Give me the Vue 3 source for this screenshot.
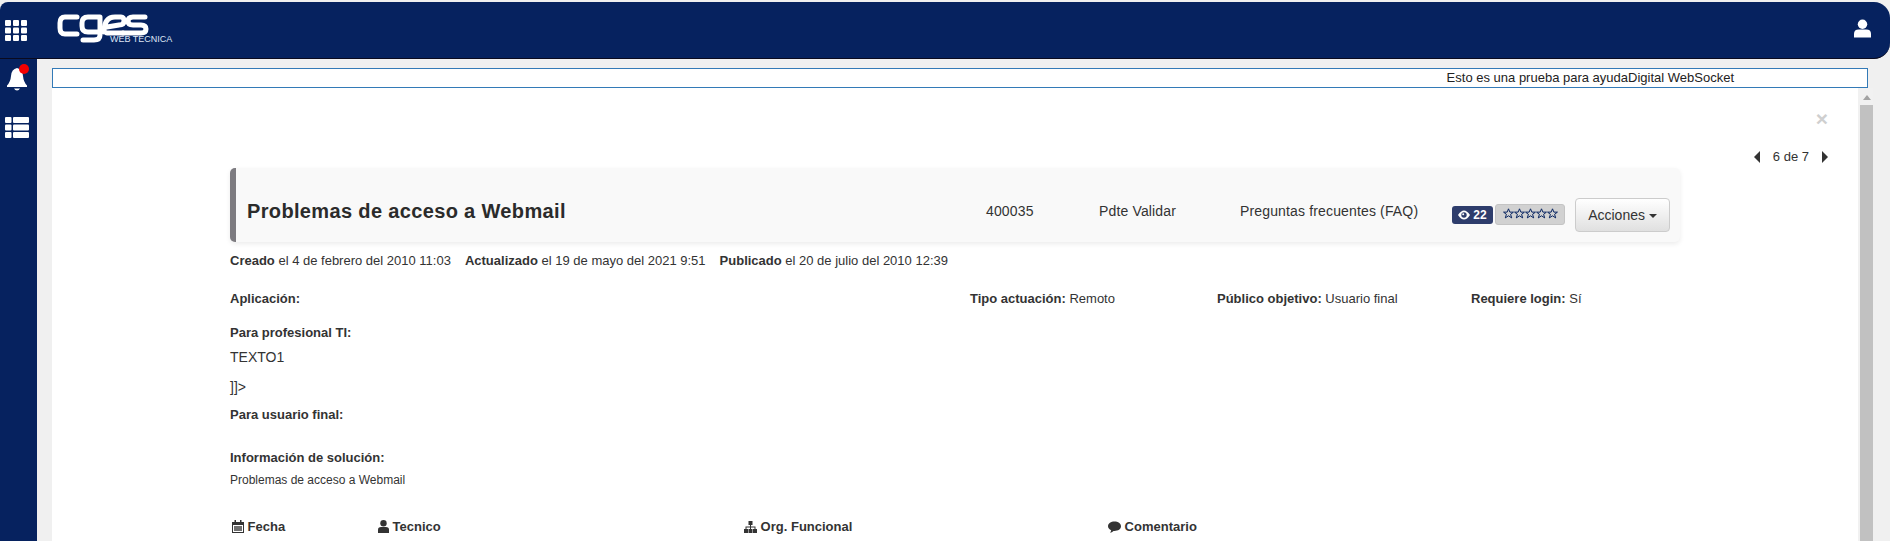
<script setup>
const metas = [
  ['Creado', 'el 4 de febrero del 2010 11:03'],
  ['Actualizado', 'el 19 de mayo del 2021 9:51'],
  ['Publicado', 'el 20 de julio del 2010 12:39'],
]
const stars = [0, 1, 2, 3, 4]
</script>

<template>
  <div class="page">
    <header class="topbar">
      <button class="side-btn">
        <svg width="22" height="22" viewBox="0 0 22 22" fill="#fff"><rect x="0" y="1" width="6" height="6" rx="1"/><rect x="8" y="1" width="6" height="6" rx="1"/><rect x="16" y="1" width="6" height="6" rx="1"/><rect x="0" y="8.500" width="6" height="6" rx="1"/><rect x="8" y="8.500" width="6" height="6" rx="1"/><rect x="16" y="8.500" width="6" height="6" rx="1"/><rect x="0" y="16" width="6" height="6" rx="1"/><rect x="8" y="16" width="6" height="6" rx="1"/><rect x="16" y="16" width="6" height="6" rx="1"/></svg>
      </button>
      <div class="logo">
        <svg width="92" height="32" viewBox="0 0 92 32" fill="none" stroke="#fff" stroke-width="5" stroke-linecap="round" stroke-linejoin="round">
          <path d="M20 5H8Q3 5 3 11V16Q3 22 8 22H20"/>
          <path d="M43 5H31Q25 5 25 11V14Q25 20 31 20H43V5M43 20V23Q43 28 37 28H26"/>
          <path d="M47 20Q47 5 58 5H64Q67 5 67 9Q67 13 62 13L50 15M50 21H66"/>
          <path d="M88 5H76Q71 5 71 9Q71 13 76 13H84Q89 13 89 17Q89 21 84 21H66"/>
        </svg>
        <span class="logo-sub">WEB TECNICA</span>
      </div>
      <svg class="user" width="17" height="19" viewBox="0 0 18 19" fill="#fff"><circle cx="9" cy="5" r="5"/><path d="M0 19V15Q0 10.500 5 10.500H13Q18 10.500 18 15V19Z"/></svg>
    </header>

    <div class="below">
      <aside class="sidebar">
        <div class="bell">
          <svg width="20" height="24" viewBox="0 0 20 24" fill="#fff"><path d="M10 1Q15.500 2 16 9Q16.500 15 20 18.500V20H0V18.500Q3.500 15 4 9Q4.500 2 10 1Z"/><path d="M7 21.500H13Q12 23.500 10 23.500Q8 23.500 7 21.500Z"/></svg>
          <span class="dot"></span>
        </div>
        <svg class="list" width="24" height="21" viewBox="0 0 24 21" fill="#fff"><rect x="0" y="0" width="6.500" height="6" rx="1"/><rect x="8" y="0" width="16" height="6" rx="1"/><rect x="0" y="7.500" width="6.500" height="6" rx="1"/><rect x="8" y="7.500" width="16" height="6" rx="1"/><rect x="0" y="15" width="6.500" height="6" rx="1"/><rect x="8" y="15" width="16" height="6" rx="1"/></svg>
      </aside>

      <main class="main">
        <div class="ticker">Esto es una prueba para ayudaDigital WebSocket</div>
        <div class="panel">
          <div class="panel-body">
            <div class="close-row"><span class="close">×</span></div>
            <div class="pager">
              <span class="tri-l"></span><span>6 de 7</span><span class="tri-r"></span>
            </div>
            <div class="card">
              <h1 class="title">Problemas de acceso a Webmail</h1>
              <span class="c-id">400035</span>
              <span class="c-state">Pdte Validar</span>
              <span class="c-type">Preguntas frecuentes (FAQ)</span>
              <span class="badge">
                <svg width="12" height="10" viewBox="0 0 12 10"><path d="M0 5Q3 0.500 6 0.500Q9 0.500 12 5Q9 9.500 6 9.500Q3 9.500 0 5Z" fill="#fff"/><circle cx="6" cy="5" r="2.700" fill="#2e3d6c"/><circle cx="5.200" cy="4.200" r="1" fill="#fff"/></svg>
                22
              </span>
              <span class="stars">
                <svg v-for="s in stars" :key="s" width="11" height="11" viewBox="0 0 20 20"><path d="M10 1.500L12.500 7.500H19L13.800 11.500L15.800 18L10 14.200L4.200 18L6.200 11.500L1 7.500H7.500Z" fill="none" stroke="#06225f" stroke-width="1.800"/></svg>
              </span>
              <button class="actions">Acciones <i class="caret"></i></button>
            </div>
            <div class="meta">
              <span v-for="m in metas" :key="m[0]"><b>{{ m[0] }}</b> {{ m[1] }}</span>
            </div>
            <div class="attrs">
              <b class="a-app">Aplicación:</b>
              <span><b>Tipo actuación:</b> Remoto</span>
              <span><b>Público objetivo:</b> Usuario final</span>
              <span><b>Requiere login:</b> Sí</span>
            </div>
            <div class="sec1"><b>Para profesional TI:</b></div>
            <div class="texto">TEXTO1</div>
            <div class="close-tag">]]&gt;</div>
            <div class="sec2"><b>Para usuario final:</b></div>
            <div class="sec3"><b>Información de solución:</b></div>
            <div class="sol">Problemas de acceso a Webmail</div>
            <div class="thead">
              <b>
                <svg width="12" height="13" viewBox="0 0 12 13" fill="#333"><path d="M0 2H12V13H0ZM1 5V12H11V5Z" fill-rule="evenodd"/><rect x="2.500" y="0" width="1.500" height="3"/><rect x="8" y="0" width="1.500" height="3"/><path d="M2 6H10V11H2Z" opacity=".7"/></svg>
                Fecha
              </b>
              <b>
                <svg width="11" height="13" viewBox="0 0 11 13" fill="#333"><circle cx="5.500" cy="3.300" r="3.200"/><path d="M0 13V9.500Q0 7 3 7H8Q11 7 11 9.500V13Z"/></svg>
                Tecnico
              </b>
              <b>
                <svg width="13" height="12" viewBox="0 0 13 12" fill="#333"><rect x="4.500" y="0" width="4" height="4"/><rect x="0" y="8" width="4" height="4"/><rect x="4.500" y="8" width="4" height="4"/><rect x="9" y="8" width="4" height="4"/><path d="M6 4H7V5.500H11.500V8H10.500V6.500H7V8H6V6.500H2.500V8H1.500V5.500H6Z"/></svg>
                Org. Funcional
              </b>
              <b>
                <svg width="13" height="12" viewBox="0 0 13 12" fill="#333"><path d="M6.500 0.500C10 0.500 13 2.500 13 5.300S10 10 6.500 10Q6 10 5.500 10Q4 11.500 2 11.800Q3 10.500 3.200 9.300C1.300 8.500 0 7 0 5.300C0 2.500 3 0.500 6.500 0.500Z"/></svg>
                Comentario
              </b>
            </div>
          </div>
          <div class="scrollbar"><span class="s-arrow"></span><span class="s-thumb"></span></div>
        </div>
      </main>
    </div>
  </div>
</template>

<style>
html, body { margin: 0; background: #f0f0f0; overflow: hidden; }
</style>

<style scoped>
.page {
  height: 541px;
  display: flex;
  flex-direction: column;
  padding-top: 2px;
  box-sizing: border-box;
  background: #f0f0f0;
  font-family: "Liberation Sans", Arial, sans-serif;
  font-size: 13px;
  color: #333;
  overflow: hidden;
}
.topbar {
  height: 57px;
  flex: none;
  display: flex;
  align-items: center;
  background: #06225f;
  border-radius: 8px 16px 16px 0;
  border-bottom: 1px solid #0a0a1e;
  box-sizing: border-box;
  padding-right: 19px;
}
.side-btn { width: 37px; padding: 0 0 0 5px; border: 0; background: none; display: flex; height: 22px; }
.logo { position: relative; margin-left: 20px; margin-top: -4px; width: 120px; height: 32px; }
.logo svg { display: block; }
.logo-sub { position: absolute; left: 53px; top: 22px; font-size: 9px; color: #dfe6f5; white-space: nowrap; }
.user { margin-left: auto; margin-top: -3px; }
.below { flex: 1; display: flex; min-height: 0; }
.sidebar {
  width: 37px;
  flex: none;
  background: #06225f;
  display: flex;
  flex-direction: column;
  align-items: center;
  padding-top: 8px;
  gap: 26px;
  box-sizing: border-box;
}
.list { margin-left: -3px; }
.bell { position: relative; height: 24px; margin-left: -3px; }
.bell svg { display: block; }
.dot { position: absolute; right: -2px; top: -3px; width: 10px; height: 10px; border-radius: 50%; background: #f40000; }
.main { flex: 1; padding: 9px 22px 0 15px; min-width: 0; display: flex; flex-direction: column; }
.ticker {
  height: 20px;
  flex: none;
  box-sizing: border-box;
  border: 1px solid #337ab7;
  background: #fff;
  text-align: right;
  padding-right: 133px;
  line-height: 17px;
  color: #222;
}
.panel { flex: 1; display: flex; background: #fff; min-height: 0; margin-right: -5px; }
.panel-body { flex: 1; min-width: 0; padding: 0 178px; }
.scrollbar { width: 15px; flex: none; background: #f1f1f1; padding-left: 2px; box-sizing: border-box; display: flex; flex-direction: column; align-items: center; }
.s-arrow { margin-top: 7px; border: 4px solid transparent; border-top: 0; border-bottom: 5px solid #a3a3a3; }
.s-thumb { flex: 1; width: 13px; background: #c1c1c1; margin-top: 5px; }
.close-row { height: 42px; display: flex; justify-content: flex-end; align-items: flex-end; margin-right: -148px; }
.close { font-size: 21px; font-weight: 700; color: #cfcfcf; line-height: 21px; margin-bottom: 1px; }
.pager { height: 38px; padding-top: 16px; display: flex; justify-content: flex-end; align-items: flex-start; gap: 13px; margin-right: -148px; box-sizing: border-box; color: #333; line-height: 22px; }
.tri-l { margin-top: 5px; border: 6px solid transparent; border-left: 0; border-right: 6px solid #333; }
.tri-r { margin-top: 5px; border: 6px solid transparent; border-right: 0; border-left: 6px solid #333; }
.card {
  height: 74px;
  box-sizing: border-box;
  display: flex;
  align-items: center;
  background: #f9f9f9;
  border-left: 6px solid #7d7b80;
  border-radius: 5px;
  box-shadow: 0 2px 5px rgba(0,0,0,.08);
  font-size: 14px;
  padding: 12px 10px 0 11px;
}
.title { font-size: 20px; font-weight: 700; margin: 0; width: 739px; letter-spacing: .35px; color: #2b2b2b; }
.c-id { width: 113px; letter-spacing: .15px; }
.c-state { width: 141px; letter-spacing: .15px; }
.c-type { width: 212px; letter-spacing: .15px; white-space: nowrap; }
.badge { width: 41px; height: 18px; margin-top: 8px; box-sizing: border-box; background: #2e3d6c; color: #fff; font-size: 12px; font-weight: 700; border-radius: 3px; display: flex; align-items: center; justify-content: center; gap: 3px; margin-right: 2px; }
.stars { width: 70px; height: 21px; margin-top: 7px; box-sizing: border-box; background: #d1d1d1; border: 1px solid #c4c4c4; border-radius: 3px; display: flex; justify-content: center; align-items: flex-start; padding-top: 3px; margin-right: 10px; }
.actions { width: 95px; height: 34px; margin-top: 8px; border: 1px solid #ccc; border-radius: 4px; background: linear-gradient(#fff, #e0e0e0); font: 14px "Liberation Sans", Arial, sans-serif; color: #333; padding: 0; white-space: nowrap; }
.caret { display: inline-block; vertical-align: middle; border: 4px solid transparent; border-bottom: 0; border-top: 4px solid #333; }
.meta { display: flex; gap: 14px; margin-top: 11px; line-height: 15px; }
.attrs { display: grid; grid-template-columns: 740px 247px 254px auto; margin-top: 23px; line-height: 15px; }
.sec1 { margin-top: 19px; line-height: 15px; }
.texto { margin-top: 9px; line-height: 16px; font-size: 14px; }
.close-tag { margin-top: 14px; line-height: 16px; font-size: 14px; }
.sec2 { margin-top: 12px; line-height: 15px; }
.sec3 { margin-top: 28px; line-height: 15px; }
.sol { margin-top: 8px; line-height: 14px; font-size: 12px; }
.thead { display: grid; grid-template-columns: 146px 366px 364px auto; margin-top: 32px; padding-left: 2px; line-height: 15px; }
.thead svg { vertical-align: -2px; }
</style>
